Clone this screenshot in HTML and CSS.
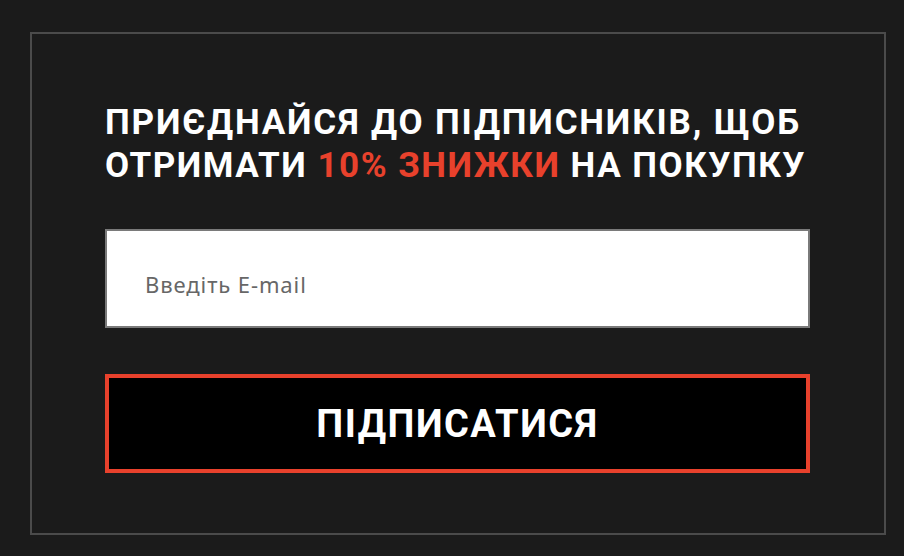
FILE: index.html
```html
<!DOCTYPE html>
<html lang="uk">
<head>
<meta charset="utf-8">
<title>Підписка</title>
<link rel="stylesheet" href="styles.css">
</head>
<body>
  <section class="subscribe">
    <h2 class="subscribe__title">ПРИЄДНАЙСЯ ДО ПІДПИСНИКІВ, ЩОБ<br><span class="subscribe__line">ОТРИМАТИ <span class="accent">10% ЗНИЖКИ</span> НА ПОКУПКУ</span></h2>
    <form class="subscribe__form">
      <input class="subscribe__input" type="email" placeholder="Введіть E-mail">
      <button class="subscribe__button" type="button">ПІДПИСАТИСЯ</button>
    </form>
  </section>
</body>
</html>
```

FILE: styles.css
```css
html, body {
  margin: 0;
  padding: 0;
  background: #1b1b1b;
}

body {
  width: 904px;
  height: 556px;
  padding: 32px 18px 0 30px;
  box-sizing: border-box;
  font-family: Roboto, "Noto Sans", sans-serif;
}

.subscribe {
  width: 856px;
  height: 503px;
  box-sizing: border-box;
  border: 2px solid #4b4b4b;
  padding: 67px 74px 0 73px;
}

.subscribe__title {
  margin: 0;
  color: #ffffff;
  font-size: 35px;
  line-height: 43px;
  font-weight: 700;
  letter-spacing: 1.8px;
  white-space: nowrap;
}

.subscribe__line {
  letter-spacing: 1.5px;
}

.accent {
  color: #e8412c;
}

.subscribe__form {
  display: flex;
  flex-direction: column;
  gap: 46px;
  margin-top: 42px;
}

.subscribe__input {
  display: block;
  width: 705px;
  height: 99px;
  box-sizing: border-box;
  border: 2px solid #7a7a7a;
  background: #ffffff;
  padding: 10px 0 0 38px;
  font-family: "Noto Sans", sans-serif;
  font-size: 22px;
  letter-spacing: 0.9px;
  color: #333;
  outline: none;
}

.subscribe__input::placeholder {
  color: #676767;
}

.subscribe__button {
  display: block;
  width: 705px;
  height: 99px;
  box-sizing: border-box;
  border: 4px solid #e8412c;
  background: #000000;
  color: #ffffff;
  font-family: Roboto, sans-serif;
  font-weight: 700;
  font-size: 38px;
  letter-spacing: 1.5px;
  padding: 0;
  cursor: pointer;
}
```
